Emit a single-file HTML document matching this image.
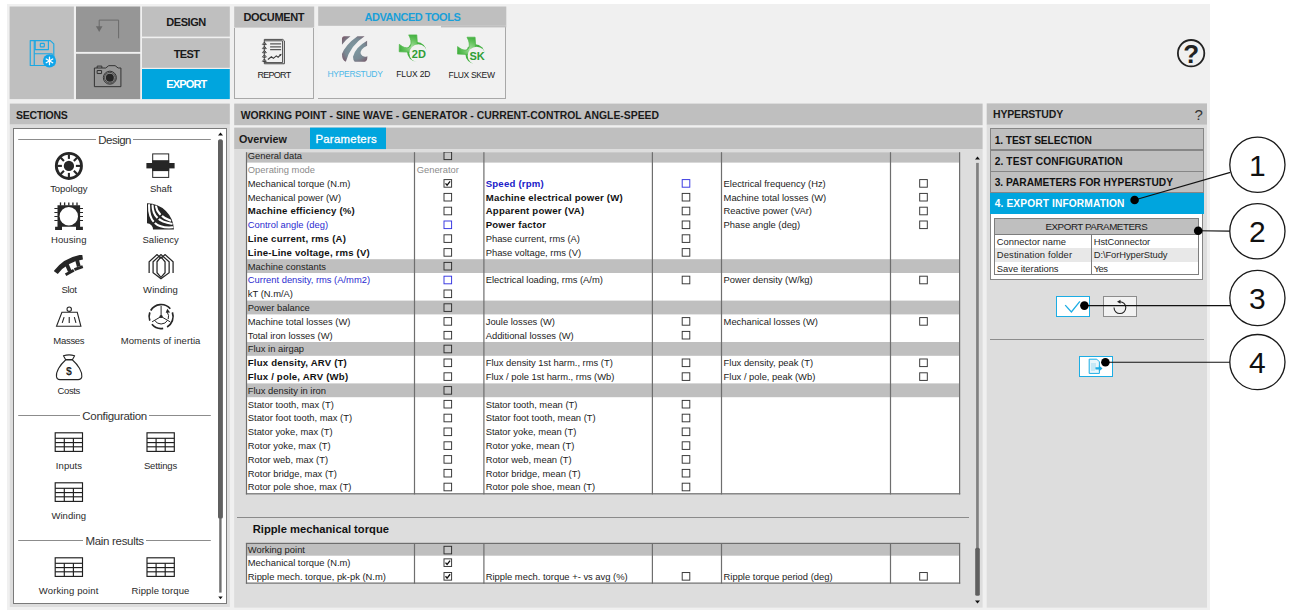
<!DOCTYPE html>
<html lang="en"><head><meta charset="utf-8"><title>FluxMotor - HyperStudy export</title>
<style>
html,body{margin:0;padding:0;background:#fff;}
body{width:1293px;height:616px;overflow:hidden;position:relative;font-family:"Liberation Sans",Arial,sans-serif;}
div,svg{position:absolute;box-sizing:border-box;}
</style></head><body>
<svg style="left:7px;top:4px" width="1203" height="606" viewBox="0 0 1203 606"><rect x="0.00" y="0.00" width="1203.00" height="606.00" fill="#f0f0f0"/></svg>
<svg style="left:9px;top:6px" width="65" height="94" viewBox="0 0 65 94"><rect x="0.60" y="0.50" width="64.30" height="92.60" fill="#bfbfbf"/></svg>
<svg style="left:76px;top:6px" width="65" height="46" viewBox="0 0 65 46"><rect x="0.00" y="0.50" width="64.20" height="45.40" fill="#969696"/></svg>
<svg style="left:76px;top:53px" width="65" height="47" viewBox="0 0 65 47"><rect x="0.00" y="0.80" width="64.20" height="45.30" fill="#969696"/></svg>
<svg style="left:142px;top:6px" width="88" height="31" viewBox="0 0 88 31"><rect x="0.00" y="0.50" width="87.80" height="30.10" fill="#bfbfbf"/></svg>
<svg style="left:142px;top:38px" width="88" height="30" viewBox="0 0 88 30"><rect x="0.00" y="0.20" width="87.80" height="29.60" fill="#bfbfbf"/></svg>
<svg style="left:142px;top:69px" width="88" height="31" viewBox="0 0 88 31"><rect x="0.00" y="0.00" width="87.80" height="30.10" fill="#00a5de"/></svg>
<div style="left:166.25px;top:15px;font-size:11px;line-height:14px;height:14px;color:#1a1a1a;white-space:nowrap;font-weight:bold;letter-spacing:-0.446px;">DESIGN</div>
<div style="left:173.75px;top:47px;font-size:11px;line-height:14px;height:14px;color:#1a1a1a;white-space:nowrap;font-weight:bold;letter-spacing:-0.653px;">TEST</div>
<div style="left:166.30px;top:77px;font-size:11px;line-height:14px;height:14px;color:#fff;white-space:nowrap;font-weight:bold;letter-spacing:-0.872px;">EXPORT</div>
<svg style="left:29px;top:39px" width="29" height="30" viewBox="0 0 29 30" ><g transform="translate(0.00 0.50)"><g fill="none" stroke="#1ca8e3" stroke-width="1.15" stroke-linejoin="round"><path d="M1.24 1.1H21.3L24.8 4.4V25.95H1.24z"/><path d="M5.26 1.1V25.95"/><path d="M6.2 1.46V10.1H19.4V1.46"/><rect x="11.3" y="3.9" width="4" height="3.4" rx="0.6"/><path d="M5.6 14.25H23.2V25.9"/></g><circle cx="20.47" cy="21.42" r="6.6" fill="#0fa4ea"/><g stroke="#fff" stroke-width="1.25" stroke-linecap="round"><path d="M20.47 17.6V25.2M17.2 19.5L23.75 23.3M17.2 23.3L23.75 19.5"/></g></g></svg><svg style="left:95px;top:16px" width="29" height="27" viewBox="0 0 29 27" ><g transform="translate(0.00 0.00)"><path d="M118.6 38.3V20.1H99.2V27" fill="none" stroke="#6a6a6a" stroke-width="1" transform="translate(-95,-16)"/><path d="M95.9 26.3H102.5L99.2 32.1z" fill="#6a6a6a" transform="translate(-95,-16)"/></g></svg><svg style="left:92px;top:64px" width="33" height="26" viewBox="0 0 33 26" ><g transform="translate(0.00 0.00)"><g fill="none" stroke="#333" stroke-width="1" stroke-linejoin="round"><path d="M2.39 4.01L13.72 4.01L16.76 1.66L23.11 1.66L26.15 4.01L28.91 4.01L28.91 22.66L2.39 22.66z"/><path d="M5.15 4.01L5.15 2.08L9.85 2.08L9.85 4.01"/><path d="M5.15 6.50L9.57 6.50L9.57 9.54L5.15 9.54z"/><circle cx="17.86" cy="13.68" r="6.5"/><circle cx="17.86" cy="13.68" r="5.3" stroke-width="0.8"/></g><circle cx="17.86" cy="13.68" r="4" fill="#262626"/></g></svg>
<svg style="left:234px;top:6px" width="81" height="22" viewBox="0 0 81 22"><rect x="0.20" y="0.50" width="80.00" height="21.10" fill="#bfbfbf"/></svg>
<div style="left:234.20px;top:27.60px;width:80.00px;height:71.50px;background:#f1f1f1;border:1px solid #a8a8a8;border-top:none;"></div>
<div style="left:243.55px;top:10px;font-size:11px;line-height:14px;height:14px;color:#1a1a1a;white-space:nowrap;font-weight:bold;letter-spacing:-0.381px;">DOCUMENT</div>
<div style="left:257.50px;top:69px;font-size:9px;line-height:12px;height:12px;color:#1a1a1a;white-space:nowrap;letter-spacing:-0.723px;">REPORT</div>
<svg style="left:261px;top:38px" width="26" height="28" viewBox="0 0 26 28" ><g transform="translate(0.00 0.00)"><g fill="none" stroke="#4a4a4a" stroke-width="1" stroke-linejoin="round"><path d="M3.3 1.4H21.8L23.4 2.9V25.75H3.3z"/><path d="M3.3 2.8H21.6V24.6H3.3"/></g><g stroke="#5a5a5a" stroke-width="1.25"><path d="M9.1 5.84H20.1M9.1 8.79H20.1M9.1 11.64H20.1"/></g><g fill="none" stroke="#3a3a3a" stroke-width="0.9"><path d="M1.3 6.5L3.4 4.1000000000000005L5.5 6.5M1.6 6.6000000000000005H5.2"/><path d="M1.3 10.6L3.4 8.2L5.5 10.6M1.6 10.7H5.2"/><path d="M1.3 14.7L3.4 12.299999999999999L5.5 14.7M1.6 14.799999999999999H5.2"/><path d="M1.3 19.1L3.4 16.7L5.5 19.1M1.6 19.2H5.2"/><path d="M1.3 23.400000000000002L3.4 21.0L5.5 23.400000000000002M1.6 23.5H5.2"/><path d="M6.86 21.46L10.4 18.8L12.4 20.4L15.3 17.9L17.1 19.2L20 16.4" stroke-width="1.1"/></g><path d="M20.6 15.7L18.2 16.6L19.8 18.3z" fill="#3a3a3a"/></g></svg>
<svg style="left:318px;top:6px" width="189" height="20" viewBox="0 0 189 20"><rect x="0.20" y="0.50" width="188.10" height="19.30" fill="#bfbfbf"/></svg>
<div style="left:318.20px;top:25.80px;width:188.10px;height:73.30px;background:#f1f1f1;border-right:1px solid #a8a8a8;border-bottom:1px solid #a8a8a8;"></div>
<svg style="left:441px;top:25px" width="66" height="3" viewBox="0 0 66 3"><rect x="0.00" y="0.80" width="65.30" height="1.60" fill="#bfbfbf"/></svg>
<div style="left:364.55px;top:10px;font-size:11px;line-height:14px;height:14px;color:#1a9fd9;white-space:nowrap;font-weight:bold;letter-spacing:-0.469px;">ADVANCED TOOLS</div>
<div style="left:327.50px;top:68px;font-size:8.5px;line-height:12px;height:12px;color:#4db8e8;white-space:nowrap;letter-spacing:-0.309px;">HYPERSTUDY</div>
<div style="left:396.30px;top:68px;font-size:8.5px;line-height:12px;height:12px;color:#1a1a1a;white-space:nowrap;letter-spacing:-0.136px;">FLUX 2D</div>
<div style="left:448.60px;top:69px;font-size:8.5px;line-height:12px;height:12px;color:#1a1a1a;white-space:nowrap;letter-spacing:-0.347px;">FLUX SKEW</div>
<svg style="left:341px;top:35px" width="29" height="29" viewBox="0 0 29 29" ><g transform="translate(0.00 0.00)"><defs><radialGradient id="hg" gradientUnits="userSpaceOnUse" cx="14" cy="14" r="17"><stop offset="0" stop-color="#7d9aa2"/><stop offset="0.6" stop-color="#798b95"/><stop offset="1" stop-color="#795a6a"/></radialGradient></defs><g fill="url(#hg)"><path d="M0.97 9.7L0.97 4.18Q0.97 1.14 3.46 1.14L9.54 1.14Q3.7 5.3 0.97 9.7z"/><path d="M16.44 1.14L23.6 1.14Q8.7 10.8 4.84 26.8Q0.97 25.7 0.97 19.1Q4.3 9.7 16.44 1.14z"/><path d="M26.1 5.84Q14.2 12.5 12.0 21.86Q12.0 25.2 13.7 26.8L23.6 26.8Q26.4 26.55 26.4 21.3Q21.97 22.97 19.76 19.1Q18.65 14.1 26.1 10.8z"/></g></g></svg><svg style="left:397px;top:31px" width="33" height="35" viewBox="0 0 33 35" ><g transform="translate(0.50 0.50)"><defs><radialGradient id="fg1" gradientUnits="userSpaceOnUse" cx="-1" cy="-1" r="13"><stop offset="0" stop-color="#a2dc9c"/><stop offset="0.55" stop-color="#62c25b"/><stop offset="1" stop-color="#3dab3c"/></radialGradient></defs><g transform="translate(15,16)"><circle cx="4.3" cy="4.3" r="9.75" fill="#43b140"/><path d="M-3.8 -12.6L4.3 -12.6L4.8 -4.9L4.8 4.6L-4.7 4.6L-13.3 4.3L-13.2 -3.2C-11 -1.5 -8.5 0.3 -5.85 0.3C-3.5 0.3 -2.3 -0.6 -1.8 -2.5C-1.2 -5 -1.3 -8 -3.8 -12.6z" fill="url(#fg1)" stroke="#4db848" stroke-width="0.7" stroke-linejoin="round"/><circle cx="5.85" cy="5.85" r="9.0" fill="#f1f1f1"/><text x="6.3" y="10.6" text-anchor="middle" font-family="Liberation Sans, Arial, sans-serif" font-weight="bold" font-size="11" fill="#2f9e35" letter-spacing="0">2D</text></g></g></svg><svg style="left:455px;top:33px" width="33" height="35" viewBox="0 0 33 35" ><g transform="translate(0.80 0.80)"><defs><radialGradient id="fg2" gradientUnits="userSpaceOnUse" cx="-1" cy="-1" r="13"><stop offset="0" stop-color="#a2dc9c"/><stop offset="0.55" stop-color="#62c25b"/><stop offset="1" stop-color="#3dab3c"/></radialGradient></defs><g transform="translate(15,16)"><circle cx="4.3" cy="4.3" r="9.75" fill="#43b140"/><path d="M-3.8 -12.6L4.3 -12.6L4.8 -4.9L4.8 4.6L-4.7 4.6L-13.3 4.3L-13.2 -3.2C-11 -1.5 -8.5 0.3 -5.85 0.3C-3.5 0.3 -2.3 -0.6 -1.8 -2.5C-1.2 -5 -1.3 -8 -3.8 -12.6z" fill="url(#fg2)" stroke="#4db848" stroke-width="0.7" stroke-linejoin="round"/><circle cx="5.85" cy="5.85" r="9.0" fill="#f1f1f1"/><text x="6.3" y="10.6" text-anchor="middle" font-family="Liberation Sans, Arial, sans-serif" font-weight="bold" font-size="11" fill="#2f9e35" letter-spacing="0">SK</text></g></g></svg>
<svg style="left:1175px;top:37px" width="32" height="32" viewBox="0 0 32 32"><circle cx="16.1" cy="16.2" r="13.2" fill="none" stroke="#222" stroke-width="1.8"/><text x="16.1" y="25.6" text-anchor="middle" font-family="Liberation Sans, Arial, sans-serif" font-weight="bold" font-size="26" fill="#222">?</text></svg>
<svg style="left:9px;top:103px" width="221" height="22" viewBox="0 0 221 22"><rect x="0.80" y="0.60" width="220.00" height="21.00" fill="#bfbfbf"/></svg>
<svg style="left:9px;top:124px" width="221" height="483" viewBox="0 0 221 483"><rect x="0.80" y="0.60" width="220.00" height="482.40" fill="#dddddd"/></svg>
<div style="left:16.00px;top:108px;font-size:10.5px;line-height:14px;height:14px;color:#1a1a1a;white-space:nowrap;font-weight:bold;letter-spacing:-0.272px;">SECTIONS</div>
<div style="left:12.80px;top:127.80px;width:214.60px;height:475.80px;background:#fff;border:1px solid #7a7a7a;"></div>
<svg style="left:18px;top:139px" width="193" height="1" viewBox="0 0 193 1"><rect x="0.20" y="0.00" width="192.60" height="1.00" fill="#8c8c8c"/></svg>
<div style="left:98.35px;top:133px;font-size:11.5px;line-height:14px;height:14px;color:#333;white-space:nowrap;letter-spacing:-0.549px;background:#fff;padding:0 2px;margin-left:-2px;">Design</div>
<svg style="left:18px;top:415px" width="193" height="1" viewBox="0 0 193 1"><rect x="0.20" y="0.00" width="192.60" height="1.00" fill="#8c8c8c"/></svg>
<div style="left:82.25px;top:409px;font-size:11.5px;line-height:14px;height:14px;color:#333;white-space:nowrap;letter-spacing:-0.285px;background:#fff;padding:0 2px;margin-left:-2px;">Configuration</div>
<svg style="left:18px;top:540px" width="193" height="1" viewBox="0 0 193 1"><rect x="0.20" y="0.00" width="192.60" height="1.00" fill="#8c8c8c"/></svg>
<div style="left:85.45px;top:534px;font-size:11.5px;line-height:14px;height:14px;color:#333;white-space:nowrap;letter-spacing:-0.307px;background:#fff;padding:0 2px;margin-left:-2px;">Main results</div>
<svg style="left:53px;top:150px" width="31" height="31" viewBox="0 0 31 31"><g transform="translate(0.90 0.90)"><circle cx="15" cy="15" r="12.55" fill="none" stroke="#262626" stroke-width="2.9"/><circle cx="15" cy="15" r="5.15" fill="#262626"/><path d="M22.00 15.00L26.50 15.00" stroke="#262626" stroke-width="2.1"/><path d="M19.95 19.95L23.13 23.13" stroke="#262626" stroke-width="2.1"/><path d="M15.00 22.00L15.00 26.50" stroke="#262626" stroke-width="2.1"/><path d="M10.05 19.95L6.87 23.13" stroke="#262626" stroke-width="2.1"/><path d="M8.00 15.00L3.50 15.00" stroke="#262626" stroke-width="2.1"/><path d="M10.05 10.05L6.87 6.87" stroke="#262626" stroke-width="2.1"/><path d="M15.00 8.00L15.00 3.50" stroke="#262626" stroke-width="2.1"/><path d="M19.95 10.05L23.13 6.87" stroke="#262626" stroke-width="2.1"/></g></svg>
<div style="left:50.20px;top:182px;font-size:9.5px;line-height:13px;height:13px;color:#2a2a2a;white-space:nowrap;letter-spacing:-0.103px;">Topology</div>
<svg style="left:146px;top:153px" width="30" height="27" viewBox="0 0 30 27"><g transform="translate(0.00 0.00)"><rect x="6.7" y="0.9" width="16" height="23.5" fill="#fff" stroke="#262626" stroke-width="1"/><rect x="6.2" y="7.2" width="17" height="10.9" fill="#262626"/><rect x="0.4" y="10" width="28.2" height="5.4" fill="#262626"/></g></svg>
<div style="left:149.95px;top:182px;font-size:9.5px;line-height:13px;height:13px;color:#2a2a2a;white-space:nowrap;letter-spacing:-0.056px;">Shaft</div>
<svg style="left:54px;top:202px" width="31" height="30" viewBox="0 0 31 30"><g transform="translate(0.00 0.00)"><path d="M3.5 3.3H26.1V24.7H28.9V27.9H22V24.7H8V27.9H1.1V24.7H3.5z" fill="#262626"/><circle cx="14.8" cy="14.2" r="9.2" fill="#fff"/><g stroke="#262626" stroke-width="1.3"><path d="M6.5 0.4V3.6"/><path d="M10.6 0.4V3.6"/><path d="M14.8 0.4V3.6"/><path d="M18.9 0.4V3.6"/><path d="M23 0.4V3.6"/></g><g stroke="#262626" stroke-width="1"><path d="M0.4 6.5H3.8M25.8 6.5H29"/><path d="M0.4 10.5H3.8M25.8 10.5H29"/><path d="M0.4 14.5H3.8M25.8 14.5H29"/><path d="M0.4 18.5H3.8M25.8 18.5H29"/></g></g></svg>
<div style="left:51.05px;top:233px;font-size:9.5px;line-height:13px;height:13px;color:#2a2a2a;white-space:nowrap;letter-spacing:0.092px;">Housing</div>
<svg style="left:147px;top:203px" width="29" height="28" viewBox="0 0 29 28"><g transform="translate(0.00 0.30)"><path d="M0 0A26.6 26.6 0 0 1 26.9 26.3H6.1A6.3 6.3 0 0 0 0 19.9z" fill="#262626"/><g fill="none" stroke="#fff" stroke-width="2.1" stroke-linecap="round"><path d="M2.05 1.8Q1.3 25.9 25.4 24"/><path d="M5.56 2.3Q5.8 17.9 24.6 20.47"/><path d="M9.06 3.2Q10.2 12.1 23.2 17.25"/></g><path d="M5.8 20.5L15.8 10.5" stroke="#262626" stroke-width="1.7"/></g></svg>
<div style="left:142.45px;top:233px;font-size:9.5px;line-height:13px;height:13px;color:#2a2a2a;white-space:nowrap;letter-spacing:0.074px;">Saliency</div>
<svg style="left:54px;top:255px" width="30" height="23" viewBox="0 0 30 23"><g transform="translate(0.60 0.00)"><path d="M1.2 17.5Q11 4.5 28 2" fill="none" stroke="#262626" stroke-width="5"/><path d="M11.8 8.5L15.2 16.3" fill="none" stroke="#262626" stroke-width="3.8"/><path d="M11 19.8L19.2 15.2" fill="none" stroke="#262626" stroke-width="2.9"/><path d="M22.2 4L24.2 11.5" fill="none" stroke="#262626" stroke-width="3.8"/><path d="M19.8 14.6L28.2 11.6" fill="none" stroke="#262626" stroke-width="2.9"/></g></svg>
<div style="left:61.55px;top:283px;font-size:9.5px;line-height:13px;height:13px;color:#2a2a2a;white-space:nowrap;letter-spacing:-0.367px;">Slot</div>
<svg style="left:148px;top:254px" width="26" height="27" viewBox="0 0 26 27"><g transform="translate(0.70 0.00)"><g fill="none" stroke="#262626" stroke-width="1.25"><path d="M4.38 7.74L12.26 0.58L20.44 7.74L20.44 18.69L12.26 24.67L4.38 18.69z"/><path d="M8.32 7.74L12.26 2.92L16.35 7.74L16.35 18.69L12.26 23.36L8.32 18.69z"/><path d="M0.44 18.98L0.44 7.74L8.32 0.58L12.26 4.38"/><path d="M24.38 18.98L24.38 7.74L16.35 0.58L12.26 4.38"/></g></g></svg>
<div style="left:143.10px;top:283px;font-size:9.5px;line-height:13px;height:13px;color:#2a2a2a;white-space:nowrap;letter-spacing:0.069px;">Winding</div>
<svg style="left:55px;top:306px" width="28" height="23" viewBox="0 0 28 23"><g transform="translate(0.50 0.00)"><g fill="none" stroke="#262626" stroke-width="1.1"><path d="M6.42 6.28L21.75 6.28L25.40 20.29L1.02 20.29z" fill="#fff"/><circle cx="13.72" cy="3.21" r="2.2" fill="#fff"/><path d="M8.61 11.09L6.72 16.93M13.72 11.09L13.72 16.93M18.83 11.09L20.44 16.93"/></g></g></svg>
<div style="left:53.35px;top:334px;font-size:9.5px;line-height:13px;height:13px;color:#2a2a2a;white-space:nowrap;letter-spacing:-0.305px;">Masses</div>
<svg style="left:146px;top:301px" width="31" height="31" viewBox="0 0 31 31"><g transform="translate(0.10 0.50)"><g fill="none" stroke="#262626" stroke-width="1.7"><path d="M4.61 9.00A12 12 0 0 1 24.19 7.29"/><path d="M26.28 10.90A12 12 0 0 1 21.00 25.39"/><path d="M17.08 26.82A12 12 0 0 1 5.81 22.71"/><path d="M3.72 19.10A12 12 0 0 1 3.72 10.90"/></g><g fill="none" stroke="#262626" stroke-width="1"><path d="M15 15V4.2M15 15L6 20.3M15 15L24 20.3"/><path d="M8.50 18.75A7.5 7.5 0 0 0 21.50 18.75"/><path d="M22.05 17.57A7.5 7.5 0 0 0 21.14 10.70"/></g><circle cx="15" cy="15" r="1.6" fill="#262626"/><path d="M19.6 11.3L21.2 7.2L24 11z" fill="#262626"/></g></svg>
<div style="left:120.75px;top:334px;font-size:9.5px;line-height:13px;height:13px;color:#2a2a2a;white-space:nowrap;letter-spacing:0.087px;">Moments of inertia</div>
<svg style="left:55px;top:354px" width="29" height="28" viewBox="0 0 29 28"><g transform="translate(0.40 0.00)"><g fill="#fff" stroke="#262626" stroke-width="1.1" stroke-linejoin="round"><path d="M10.16 5.99C4.59 10.86 0.42 17.82 1.11 22.69C1.39 25.06 2.51 25.62 4.59 25.62L22.69 25.62C25.06 25.62 26.17 24.78 26.45 22.69C26.87 17.82 22.69 10.86 17.12 5.99z"/><path d="M10.16 5.57L8.07 1.67Q13.64 0.00 19.21 1.67L17.12 5.57z"/></g><text x="13.50" y="21.30" text-anchor="middle" font-family="Liberation Sans, Arial, sans-serif" font-weight="bold" font-size="10.5" fill="#262626">$</text></g></svg>
<div style="left:57.60px;top:384px;font-size:9.5px;line-height:13px;height:13px;color:#2a2a2a;white-space:nowrap;letter-spacing:-0.417px;">Costs</div>
<svg style="left:54px;top:432px" width="30" height="21" viewBox="0 0 30 21"><g transform="translate(0.70 0.30)"><g fill="none" stroke="#1e1e1e" stroke-width="1.15"><rect x="0.5" y="0.5" width="27.3" height="18.6" fill="#fff"/><path d="M0.5 6.0H27.8"/><path d="M0.5 10.3H27.8"/><path d="M0.5 14.5H27.8"/><path d="M9.6 6.0V19.1"/><path d="M18.7 6.0V19.1"/></g></g></svg>
<div style="left:55.85px;top:459px;font-size:9.5px;line-height:13px;height:13px;color:#2a2a2a;white-space:nowrap;letter-spacing:0.070px;">Inputs</div>
<svg style="left:146px;top:432px" width="30" height="21" viewBox="0 0 30 21"><g transform="translate(0.50 0.30)"><g fill="none" stroke="#1e1e1e" stroke-width="1.15"><rect x="0.5" y="0.5" width="27.3" height="18.6" fill="#fff"/><path d="M0.5 6.0H27.8"/><path d="M0.5 10.3H27.8"/><path d="M0.5 14.5H27.8"/><path d="M9.6 6.0V19.1"/><path d="M18.7 6.0V19.1"/></g></g></svg>
<div style="left:143.95px;top:459px;font-size:9.5px;line-height:13px;height:13px;color:#2a2a2a;white-space:nowrap;letter-spacing:-0.153px;">Settings</div>
<svg style="left:54px;top:482px" width="30" height="21" viewBox="0 0 30 21"><g transform="translate(0.70 0.30)"><g fill="none" stroke="#1e1e1e" stroke-width="1.15"><rect x="0.5" y="0.5" width="27.3" height="18.6" fill="#fff"/><path d="M0.5 6.0H27.8"/><path d="M0.5 10.3H27.8"/><path d="M0.5 14.5H27.8"/><path d="M9.6 6.0V19.1"/><path d="M18.7 6.0V19.1"/></g></g></svg>
<div style="left:51.45px;top:509px;font-size:9.5px;line-height:13px;height:13px;color:#2a2a2a;white-space:nowrap;letter-spacing:0.054px;">Winding</div>
<svg style="left:54px;top:557px" width="30" height="21" viewBox="0 0 30 21"><g transform="translate(0.70 0.30)"><g fill="none" stroke="#1e1e1e" stroke-width="1.15"><rect x="0.5" y="0.5" width="27.3" height="18.6" fill="#fff"/><path d="M0.5 6.0H27.8"/><path d="M0.5 10.3H27.8"/><path d="M0.5 14.5H27.8"/><path d="M9.6 6.0V19.1"/><path d="M18.7 6.0V19.1"/></g></g></svg>
<div style="left:38.80px;top:584px;font-size:9.5px;line-height:13px;height:13px;color:#2a2a2a;white-space:nowrap;letter-spacing:0.130px;">Working point</div>
<svg style="left:146px;top:557px" width="30" height="21" viewBox="0 0 30 21"><g transform="translate(0.50 0.30)"><g fill="none" stroke="#1e1e1e" stroke-width="1.15"><rect x="0.5" y="0.5" width="27.3" height="18.6" fill="#fff"/><path d="M0.5 6.0H27.8"/><path d="M0.5 10.3H27.8"/><path d="M0.5 14.5H27.8"/><path d="M9.6 6.0V19.1"/><path d="M18.7 6.0V19.1"/></g></g></svg>
<div style="left:131.55px;top:584px;font-size:9.5px;line-height:13px;height:13px;color:#2a2a2a;white-space:nowrap;letter-spacing:0.107px;">Ripple torque</div>
<svg style="left:219px;top:139px" width="3" height="454" viewBox="0 0 3 454"><rect x="0.20" y="0.60" width="2.40" height="453.00" fill="#707070"/></svg>
<svg style="left:218px;top:139px" width="5" height="380" viewBox="0 0 5 380"><rect x="0.00" y="0.60" width="4.90" height="378.90" fill="#5f5f5f" rx="1.6"/></svg>
<svg style="left:217.5px;top:131.5px" width="5" height="4" viewBox="0 0 5 4"><path d="M0 3.5L2.5 0.5L5 3.5z" fill="#111"/></svg>
<svg style="left:218px;top:596px" width="5" height="4" viewBox="0 0 5 4"><path d="M0.3 0.5L2.5 3.2L4.7 0.5z" fill="#111"/></svg>
<svg style="left:234px;top:103px" width="749" height="23" viewBox="0 0 749 23"><rect x="0.20" y="0.60" width="748.40" height="21.60" fill="#bfbfbf"/></svg>
<div style="left:240.70px;top:109px;font-size:10.4px;line-height:13px;height:13px;color:#1a1a1a;white-space:nowrap;font-weight:bold;letter-spacing:-0.003px;">WORKING POINT - SINE WAVE - GENERATOR - CURRENT-CONTROL ANGLE-SPEED</div>
<svg style="left:234px;top:127px" width="749" height="23" viewBox="0 0 749 23"><rect x="0.20" y="0.60" width="748.40" height="21.70" fill="#bfbfbf"/></svg>
<svg style="left:310px;top:127px" width="76" height="23" viewBox="0 0 76 23"><rect x="0.00" y="0.60" width="76.00" height="21.70" fill="#00a5de"/></svg>
<div style="left:238.90px;top:132px;font-size:10.8px;line-height:14px;height:14px;color:#1a1a1a;white-space:nowrap;font-weight:bold;letter-spacing:-0.003px;">Overview</div>
<div style="left:315.40px;top:132px;font-size:11.4px;line-height:14px;height:14px;color:#fff;white-space:nowrap;letter-spacing:0.268px;-webkit-text-stroke:0.3px #fff;">Parameters</div>
<svg style="left:234px;top:149px" width="749" height="459" viewBox="0 0 749 459"><rect x="0.20" y="0.30" width="748.40" height="458.30" fill="#dddddd"/></svg>
<div style="left:0;top:152.2px;width:1293px;height:345px;overflow:hidden;"><div style="left:0;top:-152.2px;width:1293px;height:616px;">
<svg style="left:246px;top:152px" width="714" height="342" viewBox="0 0 714 342"><rect x="0.50" y="0.20" width="713.10" height="341.60" fill="#fff"/></svg>
<svg style="left:246px;top:152px" width="714" height="11" viewBox="0 0 714 11"><rect x="0.50" y="0.20" width="713.10" height="10.40" fill="#bfbfbf"/></svg>
<div style="left:247.80px;top:149px;font-size:9.4px;line-height:13px;height:13px;color:#1c1c1c;white-space:nowrap;">General data</div>
<svg style="left:443px;top:150px" width="11" height="11" viewBox="0 0 11 11"><rect x="1.00" y="2.00" width="7.6" height="7.6" fill="#c6c6c6" stroke="#2e2e2e" stroke-width="0.95"/></svg>
<div style="left:247.80px;top:163px;font-size:9.4px;line-height:13px;height:13px;color:#8c8c8c;white-space:nowrap;">Operating mode</div>
<div style="left:416.70px;top:163px;font-size:9.4px;line-height:13px;height:13px;color:#8c8c8c;white-space:nowrap;">Generator</div>
<div style="left:247.80px;top:177px;font-size:9.4px;line-height:13px;height:13px;color:#1c1c1c;white-space:nowrap;">Mechanical torque (N.m)</div>
<svg style="left:443px;top:178px" width="11" height="11" viewBox="0 0 11 11"><rect x="1.00" y="1.60" width="7.6" height="7.6" fill="#fff" stroke="#333" stroke-width="0.95"/><path d="M2.50 5.30L4.10 7.20L7.10 3.30" fill="none" stroke="#111" stroke-width="1.3"/></svg>
<div style="left:485.70px;top:177px;font-size:9.6px;line-height:13px;height:13px;color:#2020c8;white-space:nowrap;font-weight:bold;letter-spacing:0.212px;">Speed (rpm)</div>
<svg style="left:681px;top:178px" width="11" height="11" viewBox="0 0 11 11"><rect x="1.20" y="1.60" width="7.6" height="7.6" fill="#fff" stroke="#3434e0" stroke-width="0.95"/></svg>
<div style="left:723.60px;top:177px;font-size:9.4px;line-height:13px;height:13px;color:#1c1c1c;white-space:nowrap;">Electrical frequency (Hz)</div>
<svg style="left:918px;top:178px" width="11" height="11" viewBox="0 0 11 11"><rect x="1.70" y="1.60" width="7.6" height="7.6" fill="#fff" stroke="#333" stroke-width="0.95"/></svg>
<div style="left:247.80px;top:191px;font-size:9.4px;line-height:13px;height:13px;color:#1c1c1c;white-space:nowrap;">Mechanical power (W)</div>
<svg style="left:443px;top:192px" width="11" height="11" viewBox="0 0 11 11"><rect x="1.00" y="1.40" width="7.6" height="7.6" fill="#fff" stroke="#333" stroke-width="0.95"/></svg>
<div style="left:485.70px;top:191px;font-size:9.6px;line-height:13px;height:13px;color:#111;white-space:nowrap;font-weight:bold;letter-spacing:0.196px;">Machine electrical power (W)</div>
<svg style="left:681px;top:192px" width="11" height="11" viewBox="0 0 11 11"><rect x="1.20" y="1.40" width="7.6" height="7.6" fill="#fff" stroke="#333" stroke-width="0.95"/></svg>
<div style="left:723.60px;top:191px;font-size:9.4px;line-height:13px;height:13px;color:#1c1c1c;white-space:nowrap;">Machine total losses (W)</div>
<svg style="left:918px;top:192px" width="11" height="11" viewBox="0 0 11 11"><rect x="1.70" y="1.40" width="7.6" height="7.6" fill="#fff" stroke="#333" stroke-width="0.95"/></svg>
<div style="left:247.80px;top:204px;font-size:9.6px;line-height:13px;height:13px;color:#111;white-space:nowrap;font-weight:bold;letter-spacing:0.195px;">Machine efficiency (%)</div>
<svg style="left:443px;top:206px" width="11" height="11" viewBox="0 0 11 11"><rect x="1.00" y="1.20" width="7.6" height="7.6" fill="#fff" stroke="#333" stroke-width="0.95"/></svg>
<div style="left:485.70px;top:204px;font-size:9.6px;line-height:13px;height:13px;color:#111;white-space:nowrap;font-weight:bold;letter-spacing:0.208px;">Apparent power (VA)</div>
<svg style="left:681px;top:206px" width="11" height="11" viewBox="0 0 11 11"><rect x="1.20" y="1.20" width="7.6" height="7.6" fill="#fff" stroke="#333" stroke-width="0.95"/></svg>
<div style="left:723.60px;top:204px;font-size:9.4px;line-height:13px;height:13px;color:#1c1c1c;white-space:nowrap;">Reactive power (VAr)</div>
<svg style="left:918px;top:206px" width="11" height="11" viewBox="0 0 11 11"><rect x="1.70" y="1.20" width="7.6" height="7.6" fill="#fff" stroke="#333" stroke-width="0.95"/></svg>
<div style="left:247.80px;top:218px;font-size:9.4px;line-height:13px;height:13px;color:#2b2bd0;white-space:nowrap;">Control angle (deg)</div>
<svg style="left:443px;top:219px" width="11" height="11" viewBox="0 0 11 11"><rect x="1.00" y="2.00" width="7.6" height="7.6" fill="#fff" stroke="#3434e0" stroke-width="0.95"/></svg>
<div style="left:485.70px;top:218px;font-size:9.6px;line-height:13px;height:13px;color:#111;white-space:nowrap;font-weight:bold;letter-spacing:0.202px;">Power factor</div>
<svg style="left:681px;top:219px" width="11" height="11" viewBox="0 0 11 11"><rect x="1.20" y="2.00" width="7.6" height="7.6" fill="#fff" stroke="#333" stroke-width="0.95"/></svg>
<div style="left:723.60px;top:218px;font-size:9.4px;line-height:13px;height:13px;color:#1c1c1c;white-space:nowrap;">Phase angle (deg)</div>
<svg style="left:918px;top:219px" width="11" height="11" viewBox="0 0 11 11"><rect x="1.70" y="2.00" width="7.6" height="7.6" fill="#fff" stroke="#333" stroke-width="0.95"/></svg>
<div style="left:247.80px;top:232px;font-size:9.6px;line-height:13px;height:13px;color:#111;white-space:nowrap;font-weight:bold;letter-spacing:0.187px;">Line current, rms (A)</div>
<svg style="left:443px;top:233px" width="11" height="11" viewBox="0 0 11 11"><rect x="1.00" y="1.80" width="7.6" height="7.6" fill="#fff" stroke="#333" stroke-width="0.95"/></svg>
<div style="left:485.70px;top:232px;font-size:9.4px;line-height:13px;height:13px;color:#1c1c1c;white-space:nowrap;">Phase current, rms (A)</div>
<svg style="left:681px;top:233px" width="11" height="11" viewBox="0 0 11 11"><rect x="1.20" y="1.80" width="7.6" height="7.6" fill="#fff" stroke="#333" stroke-width="0.95"/></svg>
<div style="left:247.80px;top:246px;font-size:9.6px;line-height:13px;height:13px;color:#111;white-space:nowrap;font-weight:bold;letter-spacing:0.188px;">Line-Line voltage, rms (V)</div>
<svg style="left:443px;top:247px" width="11" height="11" viewBox="0 0 11 11"><rect x="1.00" y="1.60" width="7.6" height="7.6" fill="#fff" stroke="#333" stroke-width="0.95"/></svg>
<div style="left:485.70px;top:246px;font-size:9.4px;line-height:13px;height:13px;color:#1c1c1c;white-space:nowrap;">Phase voltage, rms (V)</div>
<svg style="left:681px;top:247px" width="11" height="11" viewBox="0 0 11 11"><rect x="1.20" y="1.60" width="7.6" height="7.6" fill="#fff" stroke="#333" stroke-width="0.95"/></svg>
<svg style="left:246px;top:259px" width="714" height="14" viewBox="0 0 714 14"><rect x="0.50" y="0.20" width="713.10" height="13.80" fill="#bfbfbf"/></svg>
<div style="left:247.80px;top:260px;font-size:9.4px;line-height:13px;height:13px;color:#1c1c1c;white-space:nowrap;">Machine constants</div>
<svg style="left:443px;top:261px" width="11" height="11" viewBox="0 0 11 11"><rect x="1.00" y="1.40" width="7.6" height="7.6" fill="#c6c6c6" stroke="#2e2e2e" stroke-width="0.95"/></svg>
<div style="left:247.80px;top:273px;font-size:9.4px;line-height:13px;height:13px;color:#2b2bd0;white-space:nowrap;">Current density, rms (A/mm2)</div>
<svg style="left:443px;top:275px" width="11" height="11" viewBox="0 0 11 11"><rect x="1.00" y="1.20" width="7.6" height="7.6" fill="#fff" stroke="#3434e0" stroke-width="0.95"/></svg>
<div style="left:485.70px;top:273px;font-size:9.4px;line-height:13px;height:13px;color:#1c1c1c;white-space:nowrap;">Electrical loading, rms (A/m)</div>
<svg style="left:681px;top:275px" width="11" height="11" viewBox="0 0 11 11"><rect x="1.20" y="1.20" width="7.6" height="7.6" fill="#fff" stroke="#333" stroke-width="0.95"/></svg>
<div style="left:723.60px;top:273px;font-size:9.4px;line-height:13px;height:13px;color:#1c1c1c;white-space:nowrap;">Power density (W/kg)</div>
<svg style="left:918px;top:275px" width="11" height="11" viewBox="0 0 11 11"><rect x="1.70" y="1.20" width="7.6" height="7.6" fill="#fff" stroke="#333" stroke-width="0.95"/></svg>
<div style="left:247.80px;top:287px;font-size:9.4px;line-height:13px;height:13px;color:#1c1c1c;white-space:nowrap;">kT (N.m/A)</div>
<svg style="left:443px;top:289px" width="11" height="11" viewBox="0 0 11 11"><rect x="1.00" y="1.00" width="7.6" height="7.6" fill="#fff" stroke="#333" stroke-width="0.95"/></svg>
<svg style="left:246px;top:300px" width="714" height="15" viewBox="0 0 714 15"><rect x="0.50" y="0.60" width="713.10" height="13.80" fill="#bfbfbf"/></svg>
<div style="left:247.80px;top:301px;font-size:9.4px;line-height:13px;height:13px;color:#1c1c1c;white-space:nowrap;">Power balance</div>
<svg style="left:443px;top:302px" width="11" height="11" viewBox="0 0 11 11"><rect x="1.00" y="1.80" width="7.6" height="7.6" fill="#c6c6c6" stroke="#2e2e2e" stroke-width="0.95"/></svg>
<div style="left:247.80px;top:315px;font-size:9.4px;line-height:13px;height:13px;color:#1c1c1c;white-space:nowrap;">Machine total losses (W)</div>
<svg style="left:443px;top:316px" width="11" height="11" viewBox="0 0 11 11"><rect x="1.00" y="1.60" width="7.6" height="7.6" fill="#fff" stroke="#333" stroke-width="0.95"/></svg>
<div style="left:485.70px;top:315px;font-size:9.4px;line-height:13px;height:13px;color:#1c1c1c;white-space:nowrap;">Joule losses (W)</div>
<svg style="left:681px;top:316px" width="11" height="11" viewBox="0 0 11 11"><rect x="1.20" y="1.60" width="7.6" height="7.6" fill="#fff" stroke="#333" stroke-width="0.95"/></svg>
<div style="left:723.60px;top:315px;font-size:9.4px;line-height:13px;height:13px;color:#1c1c1c;white-space:nowrap;">Mechanical losses (W)</div>
<svg style="left:918px;top:316px" width="11" height="11" viewBox="0 0 11 11"><rect x="1.70" y="1.60" width="7.6" height="7.6" fill="#fff" stroke="#333" stroke-width="0.95"/></svg>
<div style="left:247.80px;top:329px;font-size:9.4px;line-height:13px;height:13px;color:#1c1c1c;white-space:nowrap;">Total iron losses (W)</div>
<svg style="left:443px;top:330px" width="11" height="11" viewBox="0 0 11 11"><rect x="1.00" y="1.40" width="7.6" height="7.6" fill="#fff" stroke="#333" stroke-width="0.95"/></svg>
<div style="left:485.70px;top:329px;font-size:9.4px;line-height:13px;height:13px;color:#1c1c1c;white-space:nowrap;">Additional losses (W)</div>
<svg style="left:681px;top:330px" width="11" height="11" viewBox="0 0 11 11"><rect x="1.20" y="1.40" width="7.6" height="7.6" fill="#fff" stroke="#333" stroke-width="0.95"/></svg>
<svg style="left:246px;top:342px" width="714" height="14" viewBox="0 0 714 14"><rect x="0.50" y="0.00" width="713.10" height="13.80" fill="#bfbfbf"/></svg>
<div style="left:247.80px;top:342px;font-size:9.4px;line-height:13px;height:13px;color:#1c1c1c;white-space:nowrap;">Flux in airgap</div>
<svg style="left:443px;top:344px" width="11" height="11" viewBox="0 0 11 11"><rect x="1.00" y="1.20" width="7.6" height="7.6" fill="#c6c6c6" stroke="#2e2e2e" stroke-width="0.95"/></svg>
<div style="left:247.80px;top:356px;font-size:9.6px;line-height:13px;height:13px;color:#111;white-space:nowrap;font-weight:bold;letter-spacing:0.189px;">Flux density, ARV (T)</div>
<svg style="left:443px;top:358px" width="11" height="11" viewBox="0 0 11 11"><rect x="1.00" y="1.00" width="7.6" height="7.6" fill="#fff" stroke="#333" stroke-width="0.95"/></svg>
<div style="left:485.70px;top:356px;font-size:9.4px;line-height:13px;height:13px;color:#1c1c1c;white-space:nowrap;">Flux density 1st harm., rms (T)</div>
<svg style="left:681px;top:358px" width="11" height="11" viewBox="0 0 11 11"><rect x="1.20" y="1.00" width="7.6" height="7.6" fill="#fff" stroke="#333" stroke-width="0.95"/></svg>
<div style="left:723.60px;top:356px;font-size:9.4px;line-height:13px;height:13px;color:#1c1c1c;white-space:nowrap;">Flux density, peak (T)</div>
<svg style="left:918px;top:358px" width="11" height="11" viewBox="0 0 11 11"><rect x="1.70" y="1.00" width="7.6" height="7.6" fill="#fff" stroke="#333" stroke-width="0.95"/></svg>
<div style="left:247.80px;top:370px;font-size:9.6px;line-height:13px;height:13px;color:#111;white-space:nowrap;font-weight:bold;letter-spacing:0.192px;">Flux / pole, ARV (Wb)</div>
<svg style="left:443px;top:371px" width="11" height="11" viewBox="0 0 11 11"><rect x="1.00" y="1.80" width="7.6" height="7.6" fill="#fff" stroke="#333" stroke-width="0.95"/></svg>
<div style="left:485.70px;top:370px;font-size:9.4px;line-height:13px;height:13px;color:#1c1c1c;white-space:nowrap;">Flux / pole 1st harm., rms (Wb)</div>
<svg style="left:681px;top:371px" width="11" height="11" viewBox="0 0 11 11"><rect x="1.20" y="1.80" width="7.6" height="7.6" fill="#fff" stroke="#333" stroke-width="0.95"/></svg>
<div style="left:723.60px;top:370px;font-size:9.4px;line-height:13px;height:13px;color:#1c1c1c;white-space:nowrap;">Flux / pole, peak (Wb)</div>
<svg style="left:918px;top:371px" width="11" height="11" viewBox="0 0 11 11"><rect x="1.70" y="1.80" width="7.6" height="7.6" fill="#fff" stroke="#333" stroke-width="0.95"/></svg>
<svg style="left:246px;top:383px" width="714" height="15" viewBox="0 0 714 15"><rect x="0.50" y="0.40" width="713.10" height="13.80" fill="#bfbfbf"/></svg>
<div style="left:247.80px;top:384px;font-size:9.4px;line-height:13px;height:13px;color:#1c1c1c;white-space:nowrap;">Flux density in iron</div>
<svg style="left:443px;top:385px" width="11" height="11" viewBox="0 0 11 11"><rect x="1.00" y="1.60" width="7.6" height="7.6" fill="#c6c6c6" stroke="#2e2e2e" stroke-width="0.95"/></svg>
<div style="left:247.80px;top:398px;font-size:9.4px;line-height:13px;height:13px;color:#1c1c1c;white-space:nowrap;">Stator tooth, max (T)</div>
<svg style="left:443px;top:399px" width="11" height="11" viewBox="0 0 11 11"><rect x="1.00" y="1.40" width="7.6" height="7.6" fill="#fff" stroke="#333" stroke-width="0.95"/></svg>
<div style="left:485.70px;top:398px;font-size:9.4px;line-height:13px;height:13px;color:#1c1c1c;white-space:nowrap;">Stator tooth, mean (T)</div>
<svg style="left:681px;top:399px" width="11" height="11" viewBox="0 0 11 11"><rect x="1.20" y="1.40" width="7.6" height="7.6" fill="#fff" stroke="#333" stroke-width="0.95"/></svg>
<div style="left:247.80px;top:411px;font-size:9.4px;line-height:13px;height:13px;color:#1c1c1c;white-space:nowrap;">Stator foot tooth, max (T)</div>
<svg style="left:443px;top:413px" width="11" height="11" viewBox="0 0 11 11"><rect x="1.00" y="1.20" width="7.6" height="7.6" fill="#fff" stroke="#333" stroke-width="0.95"/></svg>
<div style="left:485.70px;top:411px;font-size:9.4px;line-height:13px;height:13px;color:#1c1c1c;white-space:nowrap;">Stator foot tooth, mean (T)</div>
<svg style="left:681px;top:413px" width="11" height="11" viewBox="0 0 11 11"><rect x="1.20" y="1.20" width="7.6" height="7.6" fill="#fff" stroke="#333" stroke-width="0.95"/></svg>
<div style="left:247.80px;top:425px;font-size:9.4px;line-height:13px;height:13px;color:#1c1c1c;white-space:nowrap;">Stator yoke, max (T)</div>
<svg style="left:443px;top:427px" width="11" height="11" viewBox="0 0 11 11"><rect x="1.00" y="1.00" width="7.6" height="7.6" fill="#fff" stroke="#333" stroke-width="0.95"/></svg>
<div style="left:485.70px;top:425px;font-size:9.4px;line-height:13px;height:13px;color:#1c1c1c;white-space:nowrap;">Stator yoke, mean (T)</div>
<svg style="left:681px;top:427px" width="11" height="11" viewBox="0 0 11 11"><rect x="1.20" y="1.00" width="7.6" height="7.6" fill="#fff" stroke="#333" stroke-width="0.95"/></svg>
<div style="left:247.80px;top:439px;font-size:9.4px;line-height:13px;height:13px;color:#1c1c1c;white-space:nowrap;">Rotor yoke, max (T)</div>
<svg style="left:443px;top:440px" width="11" height="11" viewBox="0 0 11 11"><rect x="1.00" y="1.80" width="7.6" height="7.6" fill="#fff" stroke="#333" stroke-width="0.95"/></svg>
<div style="left:485.70px;top:439px;font-size:9.4px;line-height:13px;height:13px;color:#1c1c1c;white-space:nowrap;">Rotor yoke, mean (T)</div>
<svg style="left:681px;top:440px" width="11" height="11" viewBox="0 0 11 11"><rect x="1.20" y="1.80" width="7.6" height="7.6" fill="#fff" stroke="#333" stroke-width="0.95"/></svg>
<div style="left:247.80px;top:453px;font-size:9.4px;line-height:13px;height:13px;color:#1c1c1c;white-space:nowrap;">Rotor web, max (T)</div>
<svg style="left:443px;top:454px" width="11" height="11" viewBox="0 0 11 11"><rect x="1.00" y="1.60" width="7.6" height="7.6" fill="#fff" stroke="#333" stroke-width="0.95"/></svg>
<div style="left:485.70px;top:453px;font-size:9.4px;line-height:13px;height:13px;color:#1c1c1c;white-space:nowrap;">Rotor web, mean (T)</div>
<svg style="left:681px;top:454px" width="11" height="11" viewBox="0 0 11 11"><rect x="1.20" y="1.60" width="7.6" height="7.6" fill="#fff" stroke="#333" stroke-width="0.95"/></svg>
<div style="left:247.80px;top:467px;font-size:9.4px;line-height:13px;height:13px;color:#1c1c1c;white-space:nowrap;">Rotor bridge, max (T)</div>
<svg style="left:443px;top:468px" width="11" height="11" viewBox="0 0 11 11"><rect x="1.00" y="1.40" width="7.6" height="7.6" fill="#fff" stroke="#333" stroke-width="0.95"/></svg>
<div style="left:485.70px;top:467px;font-size:9.4px;line-height:13px;height:13px;color:#1c1c1c;white-space:nowrap;">Rotor bridge, mean (T)</div>
<svg style="left:681px;top:468px" width="11" height="11" viewBox="0 0 11 11"><rect x="1.20" y="1.40" width="7.6" height="7.6" fill="#fff" stroke="#333" stroke-width="0.95"/></svg>
<div style="left:247.80px;top:480px;font-size:9.4px;line-height:13px;height:13px;color:#1c1c1c;white-space:nowrap;">Rotor pole shoe, max (T)</div>
<svg style="left:443px;top:482px" width="11" height="11" viewBox="0 0 11 11"><rect x="1.00" y="1.20" width="7.6" height="7.6" fill="#fff" stroke="#333" stroke-width="0.95"/></svg>
<div style="left:485.70px;top:480px;font-size:9.4px;line-height:13px;height:13px;color:#1c1c1c;white-space:nowrap;">Rotor pole shoe, mean (T)</div>
<svg style="left:681px;top:482px" width="11" height="11" viewBox="0 0 11 11"><rect x="1.20" y="1.20" width="7.6" height="7.6" fill="#fff" stroke="#333" stroke-width="0.95"/></svg>
<svg style="left:245px;top:152px" width="3" height="343" viewBox="0 0 3 343"><rect x="0.90" y="0.20" width="1.20" height="342.20" fill="#6e6e6e"/></svg>
<svg style="left:413px;top:152px" width="3" height="343" viewBox="0 0 3 343"><rect x="0.90" y="0.20" width="1.20" height="342.20" fill="#6e6e6e"/></svg>
<svg style="left:483px;top:152px" width="2" height="343" viewBox="0 0 2 343"><rect x="0.30" y="0.20" width="1.20" height="342.20" fill="#6e6e6e"/></svg>
<svg style="left:651px;top:152px" width="2" height="343" viewBox="0 0 2 343"><rect x="0.80" y="0.20" width="1.20" height="342.20" fill="#6e6e6e"/></svg>
<svg style="left:720px;top:152px" width="3" height="343" viewBox="0 0 3 343"><rect x="0.90" y="0.20" width="1.20" height="342.20" fill="#6e6e6e"/></svg>
<svg style="left:889px;top:152px" width="3" height="343" viewBox="0 0 3 343"><rect x="0.90" y="0.20" width="1.20" height="342.20" fill="#6e6e6e"/></svg>
<svg style="left:959px;top:152px" width="2" height="343" viewBox="0 0 2 343"><rect x="0.00" y="0.20" width="1.20" height="342.20" fill="#6e6e6e"/></svg>
<svg style="left:245px;top:493px" width="716" height="2" viewBox="0 0 716 2"><rect x="0.90" y="0.20" width="714.30" height="1.20" fill="#6e6e6e"/></svg>
</div></div>
<div style="left:236.7px;top:516.6px;width:732.8px;height:1px;background:#8a8a8a;"></div>
<div style="left:252.7px;top:522.30px;font-size:11.2px;line-height:14px;font-weight:bold;color:#111;white-space:nowrap;letter-spacing:0.005px;">Ripple mechanical torque</div>
<svg style="left:246px;top:543px" width="714" height="41" viewBox="0 0 714 41"><rect x="0.50" y="0.40" width="713.10" height="39.70" fill="#fff"/></svg>
<svg style="left:246px;top:543px" width="714" height="13" viewBox="0 0 714 13"><rect x="0.50" y="0.40" width="713.10" height="12.30" fill="#bfbfbf"/></svg>
<div style="left:247.80px;top:543px;font-size:9.4px;line-height:13px;height:13px;color:#1c1c1c;white-space:nowrap;">Working point</div>
<svg style="left:443px;top:545px" width="11" height="11" viewBox="0 0 11 11"><rect x="1.00" y="1.30" width="7.6" height="7.6" fill="#c6c6c6" stroke="#2e2e2e" stroke-width="0.95"/></svg>
<div style="left:247.80px;top:556px;font-size:9.4px;line-height:13px;height:13px;color:#1c1c1c;white-space:nowrap;">Mechanical torque (N.m)</div>
<svg style="left:443px;top:557px" width="11" height="11" viewBox="0 0 11 11"><rect x="1.00" y="1.85" width="7.6" height="7.6" fill="#fff" stroke="#333" stroke-width="0.95"/><path d="M2.50 5.55L4.10 7.45L7.10 3.55" fill="none" stroke="#111" stroke-width="1.3"/></svg>
<div style="left:247.80px;top:570px;font-size:9.4px;line-height:13px;height:13px;color:#1c1c1c;white-space:nowrap;">Ripple mech. torque, pk-pk (N.m)</div>
<svg style="left:443px;top:571px" width="11" height="11" viewBox="0 0 11 11"><rect x="1.00" y="1.55" width="7.6" height="7.6" fill="#fff" stroke="#333" stroke-width="0.95"/><path d="M2.50 5.25L4.10 7.15L7.10 3.25" fill="none" stroke="#111" stroke-width="1.3"/></svg>
<div style="left:485.70px;top:570px;font-size:9.4px;line-height:13px;height:13px;color:#1c1c1c;white-space:nowrap;">Ripple mech. torque +- vs avg (%)</div>
<svg style="left:681px;top:571px" width="11" height="11" viewBox="0 0 11 11"><rect x="1.20" y="1.55" width="7.6" height="7.6" fill="#fff" stroke="#333" stroke-width="0.95"/></svg>
<div style="left:723.60px;top:570px;font-size:9.4px;line-height:13px;height:13px;color:#1c1c1c;white-space:nowrap;">Ripple torque period (deg)</div>
<svg style="left:918px;top:571px" width="11" height="11" viewBox="0 0 11 11"><rect x="1.70" y="1.55" width="7.6" height="7.6" fill="#fff" stroke="#333" stroke-width="0.95"/></svg>
<svg style="left:245px;top:543px" width="3" height="41" viewBox="0 0 3 41"><rect x="0.90" y="0.40" width="1.20" height="40.30" fill="#6e6e6e"/></svg>
<svg style="left:413px;top:543px" width="3" height="41" viewBox="0 0 3 41"><rect x="0.90" y="0.40" width="1.20" height="40.30" fill="#6e6e6e"/></svg>
<svg style="left:483px;top:543px" width="2" height="41" viewBox="0 0 2 41"><rect x="0.30" y="0.40" width="1.20" height="40.30" fill="#6e6e6e"/></svg>
<svg style="left:651px;top:543px" width="2" height="41" viewBox="0 0 2 41"><rect x="0.80" y="0.40" width="1.20" height="40.30" fill="#6e6e6e"/></svg>
<svg style="left:720px;top:543px" width="3" height="41" viewBox="0 0 3 41"><rect x="0.90" y="0.40" width="1.20" height="40.30" fill="#6e6e6e"/></svg>
<svg style="left:889px;top:543px" width="3" height="41" viewBox="0 0 3 41"><rect x="0.90" y="0.40" width="1.20" height="40.30" fill="#6e6e6e"/></svg>
<svg style="left:959px;top:543px" width="2" height="41" viewBox="0 0 2 41"><rect x="0.00" y="0.40" width="1.20" height="40.30" fill="#6e6e6e"/></svg>
<svg style="left:245px;top:582px" width="716" height="2" viewBox="0 0 716 2"><rect x="0.90" y="0.50" width="714.30" height="1.20" fill="#6e6e6e"/></svg>
<svg style="left:245px;top:542px" width="716" height="2" viewBox="0 0 716 2"><rect x="0.90" y="0.80" width="714.30" height="1.20" fill="#6e6e6e"/></svg>
<svg style="left:976px;top:162px" width="3" height="386" viewBox="0 0 3 386"><rect x="0.10" y="0.90" width="2.70" height="385.10" fill="#808080"/></svg>
<svg style="left:975px;top:547px" width="5" height="49" viewBox="0 0 5 49"><rect x="0.20" y="0.70" width="4.60" height="48.10" fill="#5f5f5f" rx="1.6"/></svg>
<svg style="left:975px;top:155.8px" width="5" height="4" viewBox="0 0 5 4"><path d="M0 3.5L2.5 0.5L5 3.5z" fill="#111"/></svg>
<svg style="left:975px;top:600px" width="5" height="4" viewBox="0 0 5 4"><path d="M0 0.5L2.5 3.5L5 0.5z" fill="#111"/></svg>
<svg style="left:986px;top:103px" width="221" height="22" viewBox="0 0 221 22"><rect x="0.70" y="0.40" width="220.30" height="21.40" fill="#bfbfbf"/></svg>
<svg style="left:986px;top:124px" width="221" height="484" viewBox="0 0 221 484"><rect x="0.70" y="0.80" width="220.30" height="482.80" fill="#dddddd"/></svg>
<div style="left:993.00px;top:107px;font-size:10.5px;line-height:14px;height:14px;color:#1a1a1a;white-space:nowrap;font-weight:bold;letter-spacing:-0.176px;">HYPERSTUDY</div>
<div style="left:1194.53px;top:105px;font-size:15px;line-height:19px;height:19px;color:#333;white-space:nowrap;">?</div>
<div style="left:990.20px;top:128.00px;width:213.40px;height:22.00px;background:#bfbfbf;border:1px solid #868686;"></div>
<div style="left:994.70px;top:134px;font-size:10.2px;line-height:13px;height:13px;color:#111;white-space:nowrap;font-weight:bold;letter-spacing:-0.089px;">1. TEST SELECTION</div>
<div style="left:990.20px;top:150.00px;width:213.40px;height:22.00px;background:#bfbfbf;border:1px solid #868686;"></div>
<div style="left:994.70px;top:155px;font-size:10.2px;line-height:13px;height:13px;color:#111;white-space:nowrap;font-weight:bold;letter-spacing:0.119px;">2. TEST CONFIGURATION</div>
<div style="left:990.20px;top:171.00px;width:213.40px;height:22.00px;background:#bfbfbf;border:1px solid #868686;"></div>
<div style="left:994.70px;top:176px;font-size:10.2px;line-height:13px;height:13px;color:#111;white-space:nowrap;font-weight:bold;letter-spacing:-0.014px;">3. PARAMETERS FOR HYPERSTUDY</div>
<div style="left:990.20px;top:193.00px;width:213.40px;height:21.00px;background:#00a5de;"></div>
<div style="left:994.70px;top:197px;font-size:10.2px;line-height:13px;height:13px;color:#fff;white-space:nowrap;font-weight:bold;letter-spacing:0.128px;">4. EXPORT INFORMATION</div>
<div style="left:990.20px;top:213.90px;width:213.20px;height:65.70px;background:#fff;border:1px solid #858585;border-top:none;"></div>
<div style="left:994.30px;top:218.30px;width:204.60px;height:16.40px;background:#bfbfbf;"></div>
<div style="left:994.30px;top:248.00px;width:204.60px;height:13.70px;background:#e8e8e8;"></div>
<div style="left:994.30px;top:218.30px;width:204.60px;height:57.00px;border:1.2px solid #7d7d7d;"></div>
<div style="left:994.30px;top:234.10px;width:204.60px;height:1.20px;background:#7d7d7d;"></div>
<div style="left:1091.00px;top:234.70px;width:1.20px;height:40.50px;background:#7d7d7d;"></div>
<div style="left:1045.45px;top:220px;font-size:9.8px;line-height:13px;height:13px;color:#1a1a1a;white-space:nowrap;letter-spacing:-0.445px;">EXPORT PARAMETERS</div>
<div style="left:996.80px;top:235px;font-size:9.4px;line-height:13px;height:13px;color:#262626;white-space:nowrap;letter-spacing:-0.006px;">Connector name</div>
<div style="left:1093.70px;top:235px;font-size:9.4px;line-height:13px;height:13px;color:#262626;white-space:nowrap;letter-spacing:-0.072px;">HstConnector</div>
<div style="left:996.80px;top:248px;font-size:9.4px;line-height:13px;height:13px;color:#262626;white-space:nowrap;letter-spacing:0.136px;">Destination folder</div>
<div style="left:1093.70px;top:248px;font-size:9.4px;line-height:13px;height:13px;color:#262626;white-space:nowrap;letter-spacing:-0.082px;">D:\ForHyperStudy</div>
<div style="left:996.80px;top:262px;font-size:9.4px;line-height:13px;height:13px;color:#262626;white-space:nowrap;letter-spacing:-0.018px;">Save iterations</div>
<div style="left:1093.70px;top:262px;font-size:9.4px;line-height:13px;height:13px;color:#262626;white-space:nowrap;letter-spacing:-0.478px;">Yes</div>
<div style="left:1055.90px;top:296.00px;width:34.20px;height:21.00px;background:#fff;border:1.2px solid #1cade4;"></div>
<svg style="left:1055.9px;top:296px" width="34.2" height="21" viewBox="0 0 34.2 21"><path d="M9.2 9.1L15.4 16L23.9 5.4" fill="none" stroke="#1cade4" stroke-width="1.3"/></svg>
<div style="left:1103.10px;top:296.00px;width:34.40px;height:21.00px;background:#f2f2f2;border:1px solid #8c8c8c;"></div>
<svg style="left:1103.1px;top:296px" width="34.4" height="21" viewBox="0 0 34.4 21"><path d="M16.9 5.7A5.9 5.9 0 1 1 11 11.6" fill="none" stroke="#222" stroke-width="1.1"/><path d="M14 5.8L17.5 3.8L17.5 7.8z" fill="#222"/></svg>
<div style="left:990.20px;top:338.80px;width:213.40px;height:1.00px;background:#8c8c8c;"></div>
<div style="left:1079.40px;top:356.40px;width:34.10px;height:21.10px;background:#fff;border:1.2px solid #1cade4;"></div>
<svg style="left:1079.4px;top:356.4px" width="34.1" height="21.1" viewBox="0 0 34.1 21.1"><path d="M10.2 3.2h7.6l2.6 2.6v11.6h-10.2z" fill="#e9f6fc" stroke="#1cade4" stroke-width="1"/><path d="M12 8h5M12 10h5M12 12h5M12 14h4" stroke="#8fd3ee" stroke-width="0.8"/><path d="M16.5 11.2h3.4v-2l3.6 3.2l-3.6 3.2v-2h-3.4z" fill="#1cade4"/></svg>
<svg style="left:0;top:0" width="1293" height="616" viewBox="0 0 1293 616">
<g fill="#fff" stroke="#1a1a1a" stroke-width="1.3">
<circle cx="1257.4" cy="164.7" r="27.6"/>
<circle cx="1257.4" cy="231.3" r="27.6"/>
<circle cx="1257.4" cy="298.0" r="27.6"/>
<circle cx="1257.4" cy="362.1" r="27.6"/>
</g><g stroke="#111" stroke-width="1.1" fill="none">
<path d="M1134.6 200L1230.3 172.4"/>
<path d="M1198.2 230.8L1229.8 231.1"/>
<path d="M1084.4 305.6L1230.8 305.6"/>
<path d="M1105.4 362.3L1229.8 362.2"/>
</g><g fill="#000">
<circle cx="1134.6" cy="200" r="4.3"/>
<circle cx="1198.2" cy="230.8" r="4.3"/>
<circle cx="1084.4" cy="305.6" r="4.3"/>
<circle cx="1105.4" cy="362.3" r="4.3"/>
</g><g font-family="Liberation Sans, Arial, sans-serif" font-size="30" fill="#111" text-anchor="middle">
<text x="1257.4" y="175.5">1</text>
<text x="1257.4" y="242.1">2</text>
<text x="1257.4" y="308.8">3</text>
<text x="1257.4" y="372.9">4</text>
</g></svg>
</body></html>
